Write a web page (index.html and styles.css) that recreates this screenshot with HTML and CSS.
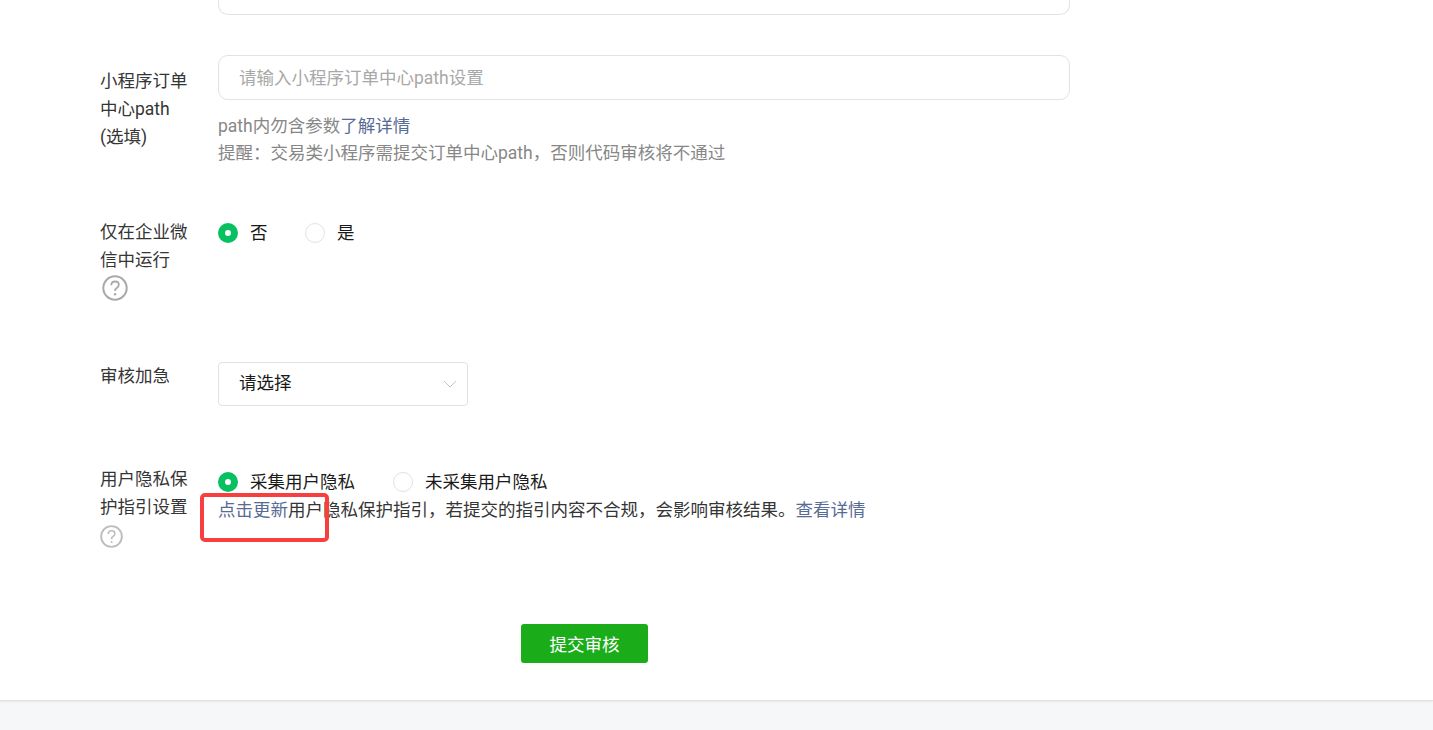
FILE: index.html
```html
<!DOCTYPE html>
<html lang="zh-CN">
<head>
<meta charset="utf-8">
<title>提交审核</title>
<link rel="stylesheet" href="styles.css">
</head>
<body>
<main class="main">
  <div class="row row-stub">
    <div class="label"></div>
    <div class="control"><div class="input-stub"></div></div>
  </div>

  <div class="row row-path">
    <div class="label label-path">小程序订单<br>中心path<br>(选填)</div>
    <div class="control">
      <div class="input placeholder">请输入小程序订单中心path设置</div>
      <p class="tips tips-path">path内勿含参数<a class="link">了解详情</a></p>
      <p class="tips tips-warn">提醒：交易类小程序需提交订单中心path，否则代码审核将不通过</p>
    </div>
  </div>

  <div class="row row-wework">
    <div class="label">仅在企业微<br>信中运行
      <svg class="help help-large" viewBox="0 0 26 26"><circle cx="13" cy="13" r="11.7" fill="none" stroke="#a9a9a9" stroke-width="2"/><path d="M9.3 10.2c0-2.3 1.6-3.7 3.8-3.7s3.7 1.3 3.7 3.3c0 1.5-.8 2.3-2 3.1-1.1.7-1.7 1.3-1.7 2.6v.6" fill="none" stroke="#a9a9a9" stroke-width="1.8"/><circle cx="13.1" cy="19.3" r="1.2" fill="#a9a9a9"/></svg>
    </div>
    <div class="control offset-small">
      <div class="radios">
        <span class="radio-item gap-a"><i class="radio on"></i>否</span>
        <span class="radio-item"><i class="radio"></i>是</span>
      </div>
    </div>
  </div>

  <div class="row row-urgent">
    <div class="label">审核加急</div>
    <div class="control">
      <div class="select">请选择
        <svg class="chevron" viewBox="0 0 14 8"><path d="M1 1l6 6 6-6" fill="none" stroke="#c4c4c4" stroke-width="1"/></svg>
      </div>
    </div>
  </div>

  <div class="row row-privacy">
    <div class="label">用户隐私保<br>护指引设置
      <svg class="help help-small" viewBox="0 0 24 24"><circle cx="12" cy="12" r="10.8" fill="none" stroke="#bdbdbd" stroke-width="2"/><path d="M8.6 9.4c0-2.1 1.4-3.4 3.5-3.4s3.4 1.2 3.4 3c0 1.4-.7 2.1-1.8 2.9-1 .6-1.6 1.2-1.6 2.4v.6" fill="none" stroke="#bdbdbd" stroke-width="1.7"/><circle cx="12.1" cy="17.8" r="1.1" fill="#bdbdbd"/></svg>
    </div>
    <div class="control offset-large">
      <div class="radios">
        <span class="radio-item gap-b"><i class="radio on"></i>采集用户隐私</span>
        <span class="radio-item"><i class="radio"></i>未采集用户隐私</span>
      </div>
      <p class="notice"><a class="link">点击更新</a>用户隐私保护指引，若提交的指引内容不合规，会影响审核结果。<a class="link">查看详情</a></p>
    </div>
  </div>

  <div class="actions"><button class="submit" type="button">提交审核</button></div>
  <div class="highlight"></div>
</main>
<footer class="footer"></footer>
</body>
</html>
```
FILE: styles.css
```css
* { box-sizing: border-box; }
html, body { margin: 0; height: 730px; overflow: hidden; }
body {
  background: #f6f7f9;
  font-family: Roboto, "Noto Sans CJK SC", sans-serif;
  font-size: 17.5px;
  color: #353535;
}
.main {
  position: relative;
  height: 701px;
  padding-left: 100px;
  background: #fff;
  border-bottom: 1px solid #e2e2e3;
  box-shadow: 0 1px 2px rgba(0, 0, 0, .06);
}
.row { display: flex; width: 970px; }
.label { flex: 0 0 118px; line-height: 28px; color: #353535; }
.control { flex: 1; min-width: 0; }
.offset-small { padding-top: 1px; }
.offset-large { padding-top: 3px; }
.row-stub { height: 15px; }
.input-stub {
  height: 15px;
  border: 1px solid #e2e2e3;
  border-top: 0;
  border-radius: 0 0 10px 10px;
}
.row-path { margin-top: 40px; height: 124px; }
.label-path { padding-top: 12px; }
.input {
  height: 45px;
  padding-left: 20px;
  line-height: 44px;
  border: 1px solid #e2e2e3;
  border-radius: 10px;
}
.placeholder { color: #a8a8a8; }
.tips { margin: 0; line-height: 28px; color: #878787; }
.tips-path { margin-top: 12px; }
.tips-warn { margin-top: -1px; }
.link { color: #576b95; }
.row-wework { margin-top: 39px; height: 101px; }
.radios { display: flex; align-items: center; height: 28px; color: #1a1a1a; }
.radio-item { display: flex; align-items: center; line-height: 28px; }
.gap-a { margin-right: 37.5px; }
.gap-b { margin-right: 38px; }
.radio {
  width: 20px;
  height: 20px;
  margin-right: 12px;
  border-radius: 50%;
  border: 1px solid #e2e2e3;
  background: #fff;
}
.radio.on { border: 7px solid #07c160; }
.help { display: block; }
.help-large { width: 26px; height: 26px; margin: 1px 0 0 2px; }
.help-small { width: 23px; height: 23px; margin: 4px 0 0 0; }
.row-urgent { margin-top: 43px; height: 44px; }
.select {
  position: relative;
  width: 250px;
  height: 44px;
  padding-left: 20px;
  line-height: 41px;
  color: #1a1a1a;
  border: 1px solid #e2e2e3;
  border-radius: 4px;
}
.chevron { position: absolute; right: 10px; top: 17px; width: 14px; height: 8px; }
.row-privacy { margin-top: 59px; height: 84px; }
.notice { margin: 0; line-height: 28px; color: #353535; white-space: nowrap; }
.actions { width: 970px; margin-top: 75px; padding-left: 421px; }
.submit {
  display: block;
  width: 127px;
  height: 39px;
  padding: 0;
  border: 0;
  border-radius: 3px;
  background: #1aad19;
  color: #fff;
  font: inherit;
}
.highlight {
  position: absolute;
  left: 200px;
  top: 493px;
  width: 129px;
  height: 49px;
  border: 4px solid #f73f3f;
  border-radius: 5px;
}
.footer { height: 29px; }
```
